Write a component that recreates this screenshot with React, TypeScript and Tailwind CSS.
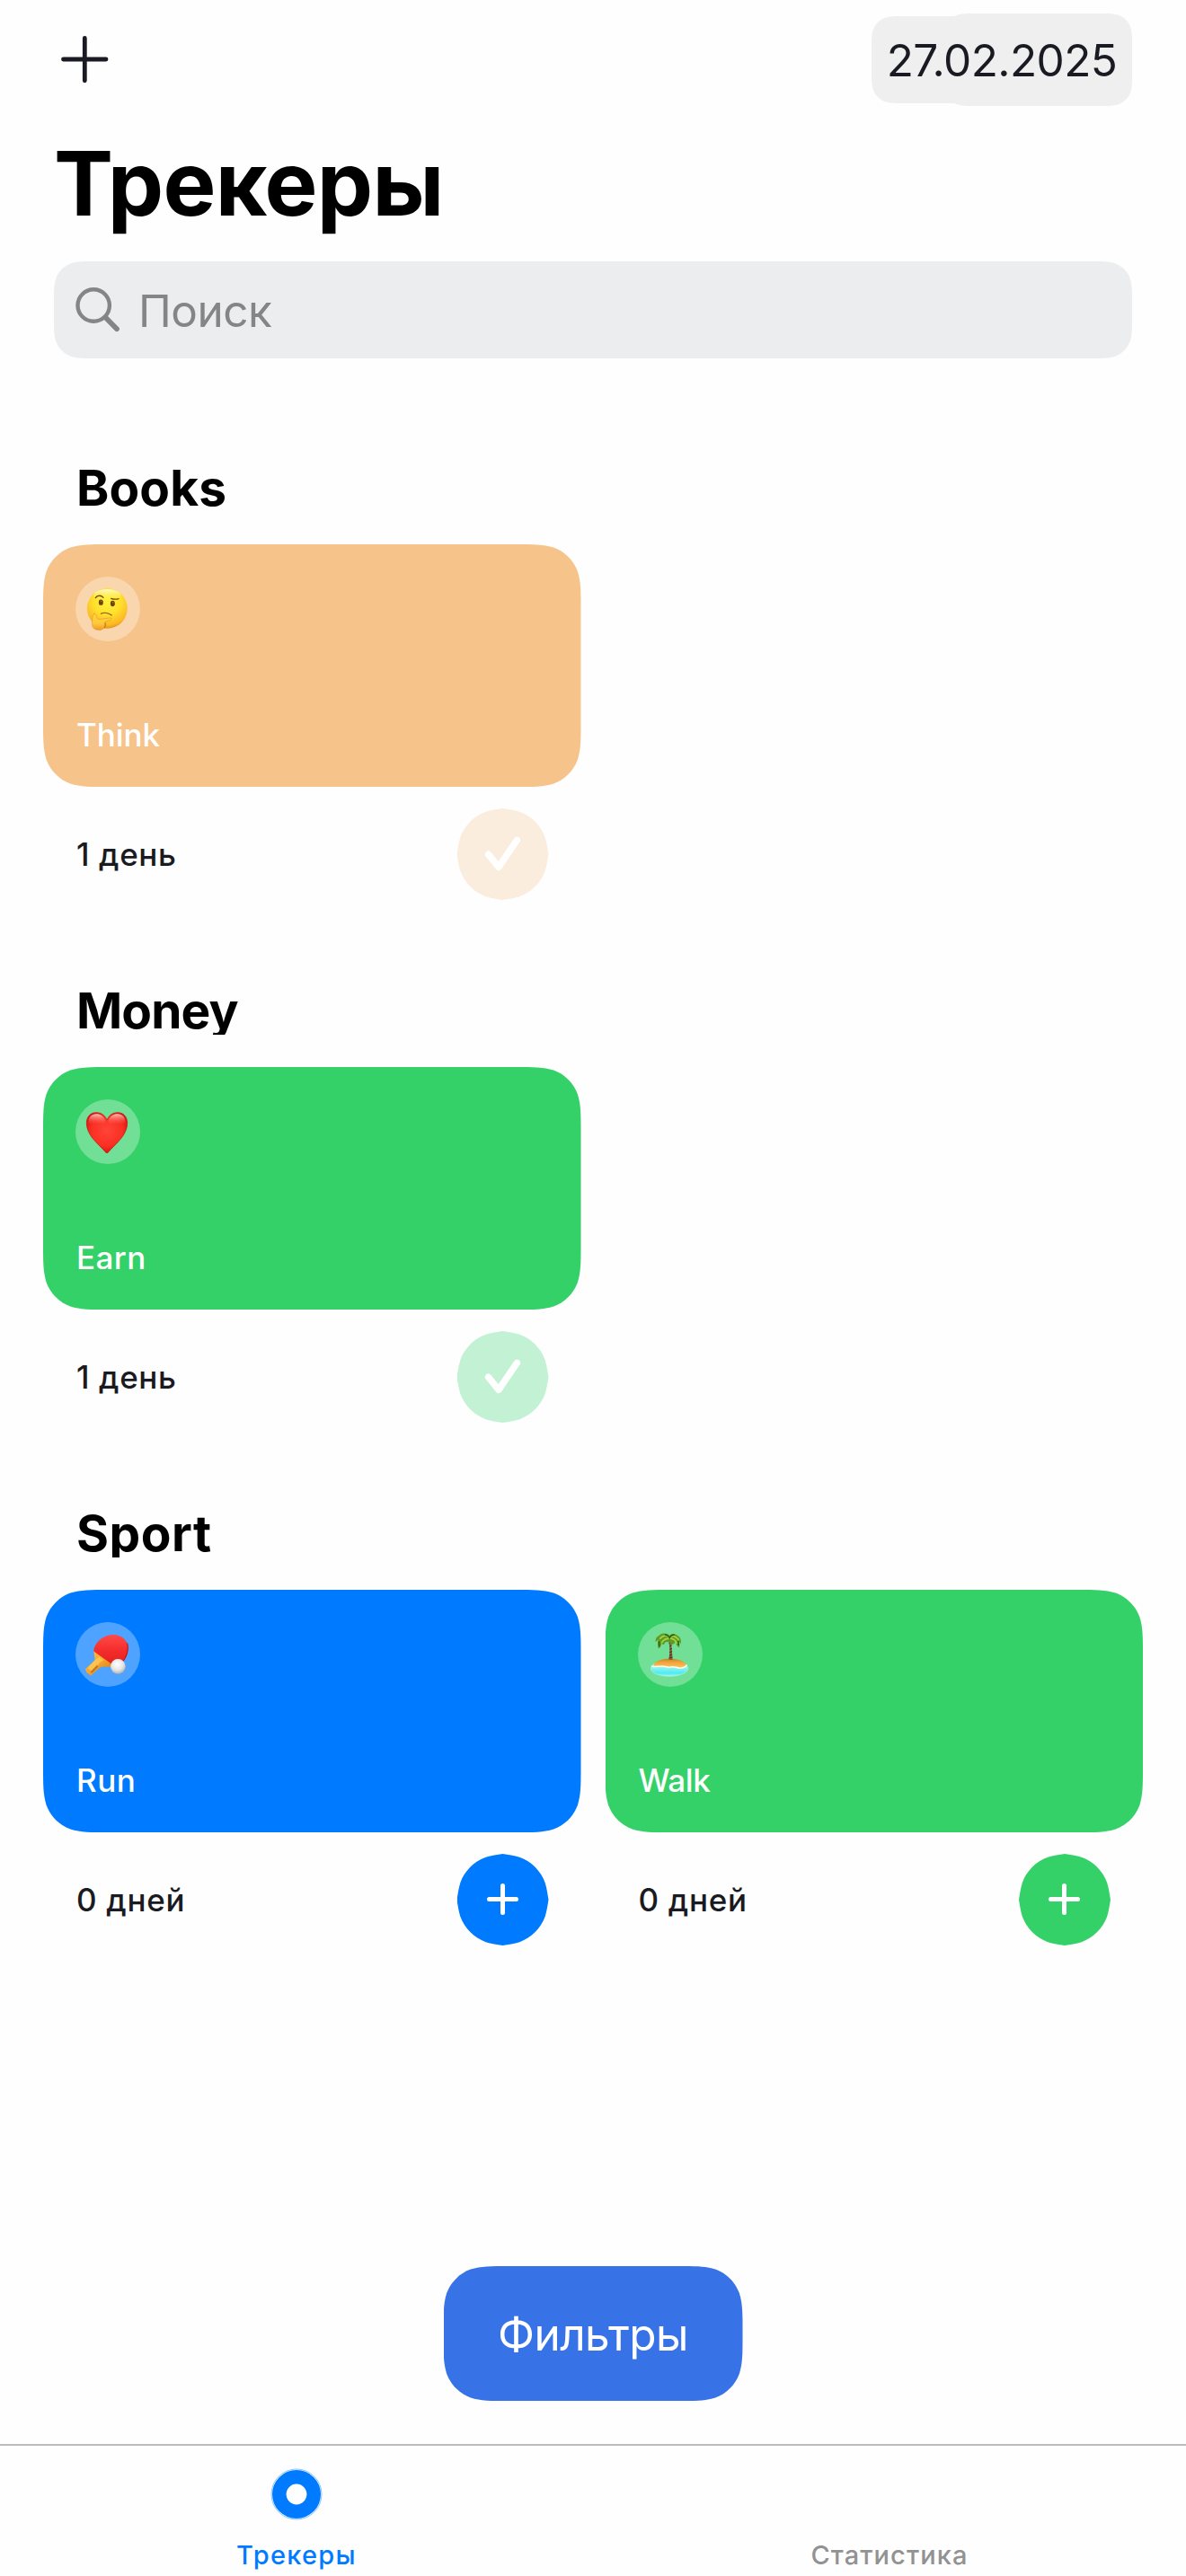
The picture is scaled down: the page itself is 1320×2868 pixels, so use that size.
import type { ReactNode } from "react";

/** Continuous-curvature rounded rectangle, as a clip-path value. */
function squircle(w: number, h: number, r: number): string {
  const e = 1.528665 * r;
  const a = 1.088493 * r;
  const b = 0.868407 * r;
  const c = 0.631494 * r;
  const d = 0.074911 * r;
  const f = 0.372824 * r;
  const g = 0.16906 * r;
  return (
    `path('M${e} 0L${w - e} 0C${w - a} 0 ${w - b} 0 ${w - c} ${d}` +
    `C${w - f} ${g} ${w - g} ${f} ${w - d} ${c}C${w} ${b} ${w} ${a} ${w} ${e}` +
    `L${w} ${h - e}C${w} ${h - a} ${w} ${h - b} ${w - d} ${h - c}` +
    `C${w - g} ${h - f} ${w - f} ${h - g} ${w - c} ${h - d}C${w - b} ${h} ${w - a} ${h} ${w - e} ${h}` +
    `L${e} ${h}C${a} ${h} ${b} ${h} ${c} ${h - d}C${f} ${h - g} ${g} ${h - f} ${d} ${h - c}` +
    `C0 ${h - b} 0 ${h - a} 0 ${h - e}L0 ${e}C0 ${a} 0 ${b} ${d} ${c}C${g} ${f} ${f} ${g} ${c} ${d}C${b} 0 ${a} 0 ${e} 0Z')`
  );
}

function ThinkingEmoji() {
  return (
    <svg viewBox="42 36 216 216" className="size-[72px]" fill="none" strokeLinecap="round">
      <defs>
        <radialGradient id="face" cx="0.5" cy="0.32" r="0.7">
          <stop offset="0" stopColor="#fff33c" />
          <stop offset="0.5" stopColor="#ffdf2c" />
          <stop offset="0.85" stopColor="#fcb823" />
          <stop offset="1" stopColor="#e08a16" />
        </radialGradient>
        <linearGradient id="shine" x1="0" y1="0" x2="0" y2="1">
          <stop offset="0" stopColor="#fffce0" stopOpacity="0.9" />
          <stop offset="1" stopColor="#fff33c" stopOpacity="0" />
        </linearGradient>
        <linearGradient id="hand" x1="0" y1="0" x2="0" y2="1">
          <stop offset="0" stopColor="#ffd93f" />
          <stop offset="0.6" stopColor="#ffc83c" />
          <stop offset="1" stopColor="#ee9a28" />
        </linearGradient>
      </defs>
      <circle cx="148" cy="142" r="67" fill="url(#face)" />
      <ellipse cx="148" cy="98" rx="46" ry="20" fill="url(#shine)" />
      <ellipse cx="127" cy="122" rx="7.5" ry="9.5" fill="#6d4108" />
      <ellipse cx="166" cy="126" rx="7.5" ry="9.5" fill="#6d4108" />
      <circle cx="128" cy="118" r="2.4" fill="#a9782c" />
      <circle cx="167" cy="122" r="2.4" fill="#a9782c" />
      <path d="M109 107C114 98 128 97 135 106" stroke="#7b4a0c" strokeWidth="4" />
      <path d="M161 109C168 112 178 112 186 110" stroke="#7b4a0c" strokeWidth="4" />
      <path d="M127 160C139 154 152 157 163 165" stroke="#8a5410" strokeWidth="3.5" />
      <path d="M139 188C144 193 142 202 139 207" stroke="#a8620e" strokeWidth="3" />
      <path
        d="M105 160C99 162 98 172 98 184C96 201 101 214 118 214C130 215 138 210 139 200C140 194 138 190 141 187L158 181C165 177 162 172 155 174L126 178C121 179 115 178 114 174C112 167 110 159 105 160Z"
        fill="url(#hand)"
        stroke="#e5952a"
        strokeWidth="2"
      />
    </svg>
  );
}

function HeartEmoji() {
  return (
    <svg viewBox="42 27 216 216" className="size-[72px]">
      <defs>
        <radialGradient id="heart" cx="0.5" cy="0.45" r="0.62">
          <stop offset="0" stopColor="#ff4438" />
          <stop offset="0.62" stopColor="#fb2f23" />
          <stop offset="0.88" stopColor="#dc160f" />
          <stop offset="1" stopColor="#ad0d08" />
        </radialGradient>
        <linearGradient id="gloss" x1="0" y1="0" x2="0" y2="1">
          <stop offset="0" stopColor="#ffd9d6" stopOpacity="0.85" />
          <stop offset="1" stopColor="#ff5a50" stopOpacity="0" />
        </linearGradient>
      </defs>
      <path
        d="M147 206C144 206 140 201 134 194C112 171 79 144 79 106C79 85 92 71 111 71C129 71 141 81 147 96C153 81 165 71 183 71C202 71 215 85 215 106C215 144 182 171 160 194C154 201 150 206 147 206Z"
        fill="url(#heart)"
        stroke="#c3120c"
        strokeWidth="2"
      />
      <path d="M85 105C85 87 96 76 111 76C126 76 137 84 142 98L140 112C120 104 100 106 85 112Z" fill="url(#gloss)" />
      <path d="M209 105C209 87 198 76 183 76C168 76 157 84 152 98L154 112C174 104 194 106 209 112Z" fill="url(#gloss)" />
    </svg>
  );
}

function PingPongEmoji() {
  return (
    <svg viewBox="42 33 216 216" className="size-[72px]">
      <defs>
        <linearGradient id="rubber" x1="0.5" y1="0" x2="0.5" y2="1">
          <stop offset="0" stopColor="#ff4b49" />
          <stop offset="0.5" stopColor="#f42d2c" />
          <stop offset="1" stopColor="#e2201f" />
        </linearGradient>
        <linearGradient id="wood" x1="0" y1="0" x2="1" y2="1">
          <stop offset="0" stopColor="#ffc545" />
          <stop offset="0.5" stopColor="#f5a32a" />
          <stop offset="1" stopColor="#c8741c" />
        </linearGradient>
        <radialGradient id="ball" cx="0.45" cy="0.35" r="0.65">
          <stop offset="0" stopColor="#ffffff" />
          <stop offset="0.6" stopColor="#e6e6e6" />
          <stop offset="1" stopColor="#b4b2b2" />
        </radialGradient>
      </defs>
      <path d="M103 128L107 160L75 190L79 201L94 212L101 204L127 182L162 182L170 170Z" fill="url(#wood)" />
      <path d="M107 160L121 149L136 160L127 165L96 197L83 186Z" fill="#ffd163" opacity="0.65" />
      <path d="M118 182L97 203L92 199L114 176Z" fill="#a95f18" opacity="0.65" />
      <path
        d="M103 128C105 103 132 76 167 75C198 75 218 95 218 121C218 143 207 164 190 174C179 180 169 179 160 171L105 132C103 131 103 130 103 128Z"
        fill="url(#rubber)"
      />
      <path d="M215 103C221 126 211 157 192 173" fill="none" stroke="#b91417" strokeWidth="3" />
      <circle cx="184" cy="181" r="25" fill="url(#ball)" />
    </svg>
  );
}

function IslandEmoji() {
  return (
    <svg viewBox="42 33 216 216" className="size-[72px]" fill="none">
      <defs>
        <linearGradient id="sea" x1="0" y1="0" x2="0" y2="1">
          <stop offset="0" stopColor="#e9fff2" />
          <stop offset="0.45" stopColor="#8ff3f0" />
          <stop offset="0.8" stopColor="#4ceaf5" />
          <stop offset="1" stopColor="#a5f5f0" />
        </linearGradient>
        <linearGradient id="sand" x1="0" y1="0" x2="0" y2="1">
          <stop offset="0" stopColor="#c98428" />
          <stop offset="0.4" stopColor="#f0a53a" />
          <stop offset="1" stopColor="#ffc163" />
        </linearGradient>
      </defs>
      <ellipse cx="147" cy="188" rx="62" ry="26" fill="url(#sea)" stroke="#a4efd2" strokeWidth="2.5" />
      <path
        d="M94 178C98 163 121 155 148 155C178 155 200 164 203 177C198 187 185 188 175 184C163 179 154 186 143 183C130 178 116 182 108 180C102 179 98 182 94 178Z"
        fill="url(#sand)"
      />
      <path
        d="M89 181C99 182 109 180 119 180C130 178 140 186 151 183C163 178 173 189 188 186C197 185 203 180 205 177"
        stroke="#fffbe8"
        strokeWidth="4.5"
        strokeLinecap="round"
      />
      <path d="M144 94C149 115 149 135 145 158L158 159C156 135 155 115 151 94Z" fill="#84593b" />
      <path d="M146 104L153 101M148 114L155 111M148 124L156 121M147 134L156 131M147 144L156 141M146 153L157 150" stroke="#4e321d" strokeWidth="3" />
      <path
        d="M148 78C138 68 121 69 113 78C103 82 100 91 101 99L111 91C107 102 107 112 111 122C116 118 120 111 121 103C125 111 130 109 133 100L146 99L152 108C159 109 164 105 166 99C169 108 174 114 180 118C182 109 181 102 178 96L185 105C188 94 184 83 173 77C165 70 153 70 148 78Z"
        fill="#5d9c22"
      />
      <path
        d="M147 84C137 75 124 78 116 88M149 84C159 76 169 80 178 92M143 88C132 88 126 94 122 101M152 88C161 88 167 93 171 103"
        stroke="#a8d444"
        strokeWidth="5"
        strokeLinecap="round"
      />
      <path d="M133 75C140 76 145 80 148 85C151 79 157 75 163 76M112 98L114 114M177 97L178 109" stroke="#2f5a14" strokeWidth="4" strokeLinecap="round" />
    </svg>
  );
}

function CheckIcon() {
  return (
    <svg viewBox="0 0 102 102" className="size-[102px]" fill="none" stroke="#fff" strokeWidth="7.4" strokeLinecap="round" strokeLinejoin="round">
      <path d="M34.6 51.2L46 65.4L66.4 35.3" />
    </svg>
  );
}

function PlusIcon() {
  return (
    <svg viewBox="0 0 102 102" className="size-[102px]" fill="none" stroke="#fff" strokeWidth="5" strokeLinecap="round">
      <path d="M35.5 50.5H65.5M50.5 35.5V65.5" />
    </svg>
  );
}

type Tracker = {
  name: string;
  nameClass: string;
  days: string;
  daysClass: string;
  emoji: ReactNode;
  cardClass: string;
  buttonClass: string;
  done: boolean;
};

const sections: { title: string; titleClass: string; trackers: Tracker[] }[] = [
  {
    title: "Books",
    titleClass: "tracking-[0.1px]",
    trackers: [
      {
        name: "Think",
        nameClass: "tracking-[-0.1px]",
        days: "1 день",
        daysClass: "tracking-[0.62px]",
        emoji: <ThinkingEmoji />,
        cardClass: "bg-[#f6c48b]",
        buttonClass: "bg-[#fbeddd]",
        done: true,
      },
    ],
  },
  {
    title: "Money",
    titleClass: "tracking-[-0.9px]",
    trackers: [
      {
        name: "Earn",
        nameClass: "tracking-[0.4px]",
        days: "1 день",
        daysClass: "tracking-[0.62px]",
        emoji: <HeartEmoji />,
        cardClass: "bg-[#34d169]",
        buttonClass: "bg-[#c2f1d3]",
        done: true,
      },
    ],
  },
  {
    title: "Sport",
    titleClass: "tracking-[0.5px]",
    trackers: [
      {
        name: "Run",
        nameClass: "tracking-[0.5px]",
        days: "0 дней",
        daysClass: "tracking-[0.7px]",
        emoji: <PingPongEmoji />,
        cardClass: "bg-[#007bff]",
        buttonClass: "bg-[#007bff]",
        done: false,
      },
      {
        name: "Walk",
        nameClass: "tracking-[-0.4px]",
        days: "0 дней",
        daysClass: "tracking-[0.7px]",
        emoji: <IslandEmoji />,
        cardClass: "bg-[#34d169]",
        buttonClass: "bg-[#34d169]",
        done: false,
      },
    ],
  },
];

function TrackerCell({ t }: { t: Tracker }) {
  return (
    <article>
      <div
        className={`flex h-[270px] flex-col justify-between pt-9 pr-9 pb-[36px] pl-9 ${t.cardClass}`}
        style={{ clipPath: squircle(598.5, 270, 48) }}
      >
        <div className="size-[72px] rounded-full bg-white/30">{t.emoji}</div>
        <p className={`pl-px text-[35px] leading-[44px] font-medium text-white ${t.nameClass}`}>{t.name}</p>
      </div>
      <div className="mt-6 flex h-[102px] items-center justify-between pr-9 pl-[37px]">
        <p className={`text-[35px] leading-[44px] font-medium text-[#1a1b22] ${t.daysClass}`}>{t.days}</p>
        <button
          className={`size-[102px] [clip-path:path('M51_0C57_1_64_2_69.8_3.8C83_8.6_93.4_19_98.2_32.2C100_38_101_45_102_51C101_57_100_64_98.2_69.8C93.4_83_83_93.4_69.8_98.2C64_100_57_101_51_102C45_101_38_100_32.2_98.2C19_93.4_8.6_83_3.8_69.8C2_64_1_57_0_51C1_45_2_38_3.8_32.2C8.6_19_19_8.6_32.2_3.8C38_2_45_1_51_0Z')] ${t.buttonClass}`}
        >
          {t.done ? <CheckIcon /> : <PlusIcon />}
        </button>
      </div>
    </article>
  );
}

export default function App() {
  return (
    <div className="flex h-[2868px] w-[1320px] flex-col bg-[#fefefe] font-['Inter',sans-serif] text-black">
      <header className="px-[60px]">
        <div className="flex h-[133px] items-center justify-between pl-2">
          <button>
            <svg viewBox="0 0 53 53" className="size-[53px]" fill="none" stroke="#1a1b22" strokeWidth="4.8" strokeLinecap="round">
              <path d="M2.5 26H50M26.3 2.4V49.8" />
            </svg>
          </button>
          <div className="relative flex h-[103px] w-[290px] items-center justify-center">
            <div className="absolute top-[3px] left-0 h-[97px] w-[270px] bg-[#efefef]" style={{ clipPath: squircle(270, 97, 24) }} />
            <div className="absolute top-0 right-0 h-[103px] w-[210px] bg-[#efefef]" style={{ clipPath: squircle(210, 103, 24) }} />
            <span className="relative text-[49.5px] leading-[60px] tracking-[-0.59px] text-[#1a1b22]">27.02.2025</span>
          </div>
        </div>
        <h1 className="text-[99px] leading-[142px] font-bold tracking-[-0.7px]">Трекеры</h1>
        <div
          className="mt-4 flex h-[108px] items-center bg-[#ecedef] pl-6 text-[#858588]"
          style={{ clipPath: squircle(1200, 108, 30) }}
        >
          <svg viewBox="0 0 50 50" className="size-[50px]" fill="none" stroke="currentColor" strokeLinecap="round">
            <circle cx="20.2" cy="20" r="17.7" strokeWidth="4.4" />
            <path d="M33.5 33.5L46 46.2" strokeWidth="5.8" />
          </svg>
          <span className="pt-0.5 pl-5 text-[49.5px] leading-[60px] tracking-[-0.5px]">Поиск</span>
        </div>
      </header>

      <main className="flex flex-col gap-24 px-12 pt-[117px]">
        {sections.map((s) => (
          <section key={s.title}>
            <h2 className={`h-[54px] overflow-hidden pl-[37px] text-[55px] leading-[54px] font-bold ${s.titleClass}`}>{s.title}</h2>
            <div className="mt-9 grid grid-cols-2 gap-[27px]">
              {s.trackers.map((t) => (
                <TrackerCell key={t.name} t={t} />
              ))}
            </div>
          </section>
        ))}
      </main>

      <div className="flex flex-1 items-end justify-center pb-12">
        <button
          className="h-[150px] w-[333px] bg-[#3772e7] pt-0.5 text-[49.5px] leading-[60px] tracking-[-0.59px] text-white"
          style={{ clipPath: squircle(333, 150, 48) }}
        >
          Фильтры
        </button>
      </div>

      <nav className="grid h-[147px] grid-cols-2 border-t-2 border-[#b9bcbe] text-center text-[29px] leading-9 font-medium">
        <div className="flex flex-col items-center pt-[25px] text-[#007bff]">
          <svg viewBox="0 0 58 58" className="size-[58px]" fill="none" stroke="currentColor">
            <circle cx="29" cy="29" r="28" strokeWidth="1" opacity="0.45" />
            <circle cx="29" cy="29" r="19.2" strokeWidth="15.6" />
          </svg>
          <span className="mt-[21px] tracking-[1.3px]">Трекеры</span>
        </div>
        <div className="flex flex-col items-center pt-[104px] text-[#929293]">
          <span className="tracking-[1.07px]">Статистика</span>
        </div>
      </nav>
    </div>
  );
}
